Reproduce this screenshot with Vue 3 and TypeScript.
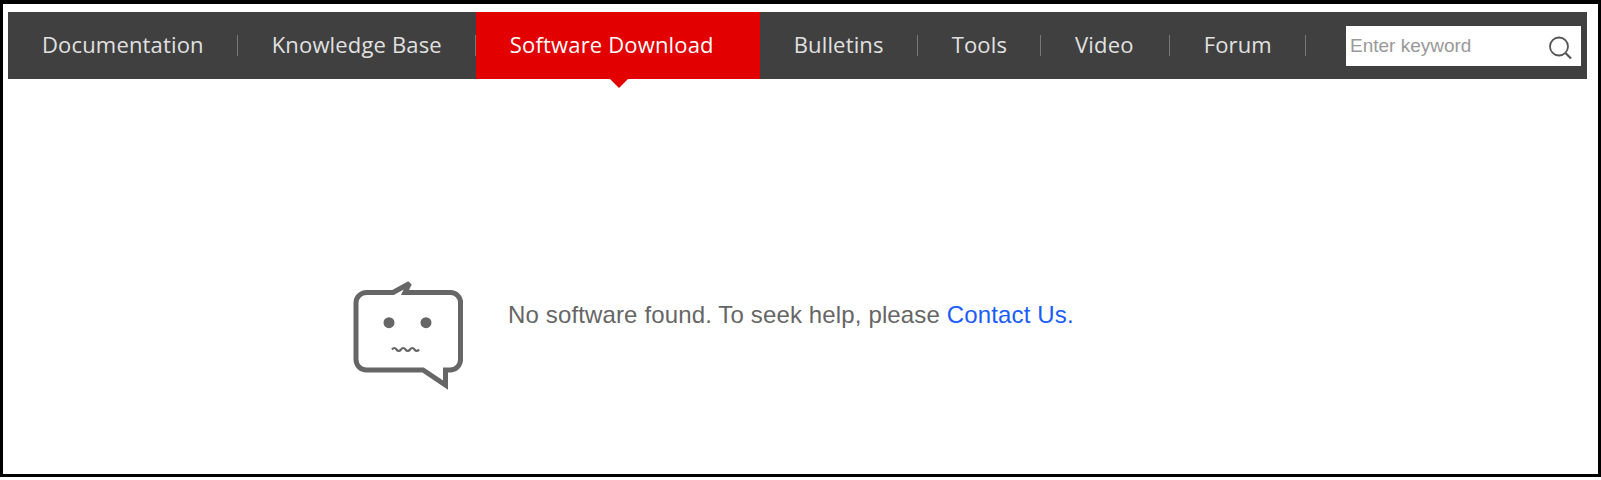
<template>
  <div class="frame">
    <nav class="nav">
      <a
        v-for="item in items"
        :key="item"
        class="nav-item"
        :class="{ active: item === activeItem }"
      >{{ item }}</a>
      <div class="search">
        <input class="search-input" type="text" placeholder="Enter keyword" />
        <svg class="search-icon" width="26" height="26" viewBox="0 0 26 26" fill="none">
          <circle cx="12" cy="11.500" r="9" stroke="#555" stroke-width="1.800" />
          <path d="M18.500 18l5.500 5.500" stroke="#555" stroke-width="2.200" />
        </svg>
      </div>
    </nav>
    <div class="empty">
      <svg class="empty-icon" width="120" height="120" viewBox="0 0 120 120" fill="none">
        <path
          d="M43 14.500L59.500 5.500L55 14.500H100A10 10 0 0 1 110.500 25V81.500A10.500 10.500 0 0 1 100 92H95.500L95.500 107L73 92H16.500A10.500 10.500 0 0 1 6 81.500V25A10.500 10.500 0 0 1 16.500 14.500Z"
          stroke="#666"
          stroke-width="5"
          stroke-miterlimit="3"
        />
        <circle cx="39" cy="44.700" r="5.500" fill="#666" />
        <circle cx="76" cy="44.700" r="5.500" fill="#666" />
        <path
          d="M42 71.500q2.300-3 4.500 0t4.500 0t4.500 0t4.500 0t4.500 0t4.500 0"
          stroke="#666"
          stroke-width="2.200"
        />
      </svg>
      <p class="empty-text">
        No software found. To seek help, please
        <a class="contact">Contact Us.</a>
      </p>
    </div>
  </div>
</template>

<script setup lang="ts">
const items = [
  'Documentation',
  'Knowledge Base',
  'Software Download',
  'Bulletins',
  'Tools',
  'Video',
  'Forum',
]

const activeItem = 'Software Download'
</script>

<style>
html,
body {
  margin: 0;
  background: #fff;
}
</style>

<style scoped>
.frame {
  box-sizing: border-box;
  width: 1601px;
  height: 477px;
  border: 3px solid #000;
  border-top-width: 4px;
  padding: 8px 11px 0 5px;
}

.nav {
  display: flex;
  align-items: center;
  height: 67px;
  background: #404040;
}

.nav-item {
  position: relative;
  padding: 0 34px 2px;
  font-family: "Open Sans", sans-serif;
  font-size: 22px;
  letter-spacing: 0.16px;
  line-height: 65px;
  color: #e0e0e0;
}

.nav-item:nth-child(6) {
  padding-right: 36px;
}

.nav-item::after {
  content: "";
  position: absolute;
  top: 23px;
  right: 0;
  width: 1px;
  height: 21px;
  background: #777;
}

.nav-item.active {
  padding-right: 46px;
  background: #e30000;
  color: #fff;
}

.nav-item.active::after {
  top: 100%;
  right: auto;
  left: 134px;
  width: 0;
  height: 0;
  background: none;
  border-top: 9px solid #e30000;
  border-left: 9.500px solid transparent;
  border-right: 9.500px solid transparent;
}

.search {
  display: flex;
  align-items: center;
  width: 235px;
  height: 40px;
  margin-left: auto;
  margin-right: 6px;
  background: #fff;
}

.search-input {
  flex: 1;
  min-width: 0;
  padding: 0 0 0 4px;
  border: 0;
  outline: none;
  font-family: "Liberation Sans", Arial, sans-serif;
  font-size: 19px;
  color: #333;
}

.search-input::placeholder {
  color: #999;
  opacity: 1;
}

.search-icon {
  margin: 4px 8px 0 0;
}

.empty {
  display: flex;
  align-items: center;
  gap: 38px;
  padding: 199px 0 0 342px;
}

.empty-icon {
  flex: none;
}

.empty-text {
  margin: 0 0 46px;
  font-family: "Liberation Sans", Arial, sans-serif;
  font-size: 24px;
  letter-spacing: 0.14px;
  color: #666;
}

.contact {
  color: #1a5cff;
}
</style>
